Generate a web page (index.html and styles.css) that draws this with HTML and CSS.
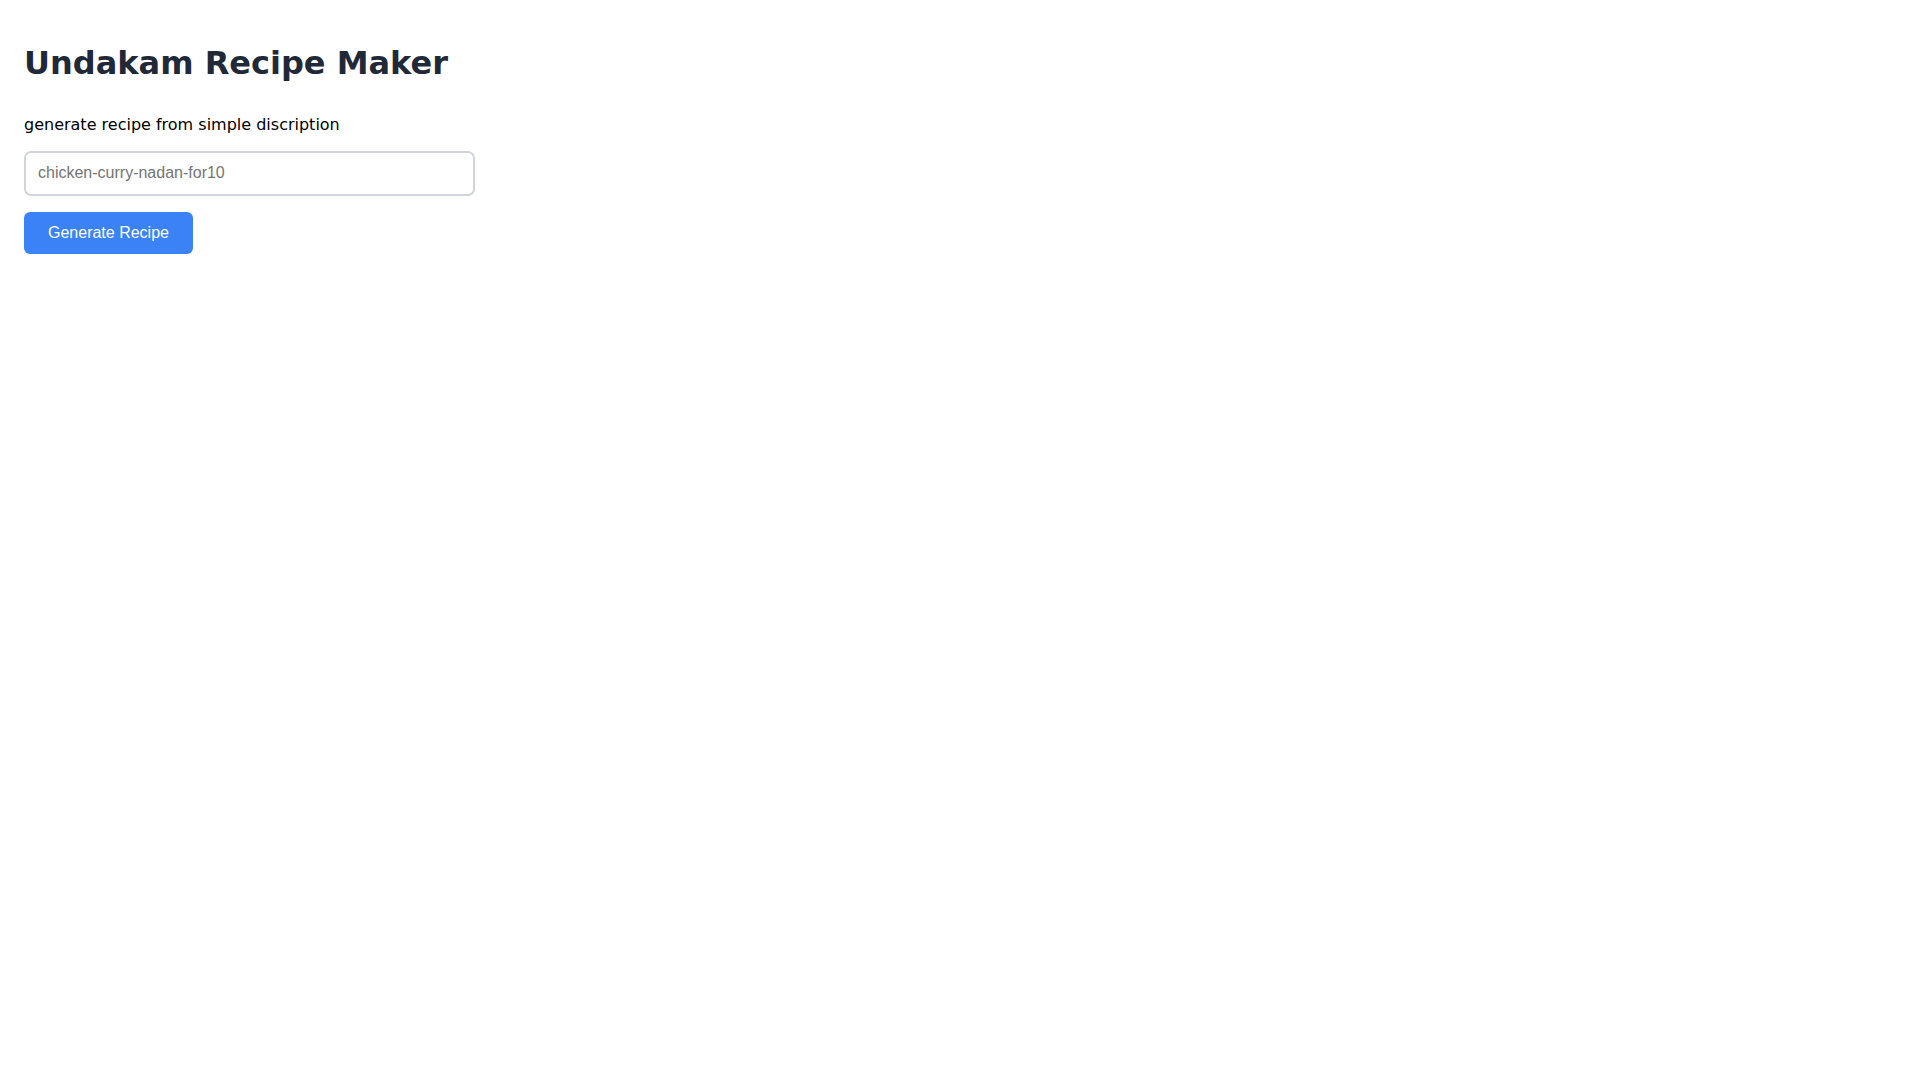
FILE: index.html
```html
<!DOCTYPE html>
<html lang="en">
<head>
<meta charset="utf-8">
<title>Undakam Recipe Maker</title>
<link rel="stylesheet" href="styles.css">
</head>
<body>
<div class="page">
  <h1 class="title">Undakam Recipe Maker</h1>
  <label class="label" for="desc">generate recipe from simple discription</label>
  <input id="desc" class="input" type="text" placeholder="chicken-curry-nadan-for10">
  <button class="btn" type="button">Generate Recipe</button>
</div>
</body>
</html>
```

FILE: styles.css
```css
html, body {
  margin: 0;
  padding: 0;
  background: #ffffff;
}
.page {
  padding: 24px;
  min-height: 100vh;
  box-sizing: content-box;
  font-family: "DejaVu Sans", sans-serif;
  display: flex;
  flex-direction: column;
  align-items: flex-start;
}
.title {
  font-family: "DejaVu Sans", sans-serif;
  font-size: 32px;
  font-weight: bold;
  line-height: 1.164;
  color: #1f2937;
  margin: 21px 0 0 0;
}
.label {
  font-family: "DejaVu Sans", sans-serif;
  font-size: 16px;
  line-height: 1.164;
  color: #000000;
  margin-top: 34px;
}
.input {
  box-sizing: border-box;
  margin-top: 16px;
  width: 451px;
  height: 45px;
  padding: 0 12px;
  border: 2px solid #d1d5db;
  border-radius: 7px;
  font-family: "Liberation Sans", Arial, sans-serif;
  font-size: 16px;
  color: #111827;
  background: #ffffff;
  outline: none;
}
.input::placeholder {
  color: #757575;
}
.btn {
  box-sizing: border-box;
  margin-top: 16px;
  height: 42px;
  padding: 0 24px;
  border: none;
  border-radius: 6px;
  background: #3b82f6;
  color: #ffffff;
  font-family: "Liberation Sans", Arial, sans-serif;
  font-size: 16px;
  cursor: pointer;
}
```
